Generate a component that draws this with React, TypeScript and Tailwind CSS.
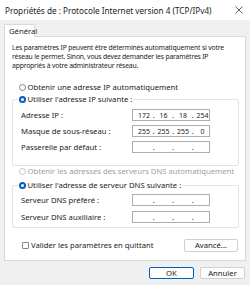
import { ReactNode } from "react";

const font = "font-['Noto_Sans','Liberation_Sans',sans-serif]";

function Radio({ checked, disabled }: { checked?: boolean; disabled?: boolean }) {
  if (checked) {
    return (
      <span className="w-[7px] h-[7px] rounded-full bg-[#005fb8] flex items-center justify-center shrink-0">
        <span className="w-[3px] h-[3px] rounded-full bg-white" />
      </span>
    );
  }
  return (
    <span
      className={`w-[7px] h-[7px] rounded-full border bg-white shrink-0 ${
        disabled ? "border-[#c5c5c5]" : "border-[#858585]"
      }`}
    />
  );
}

function IpField({ value }: { value?: string[] }) {
  const parts = value ?? ["", "", "", ""];
  return (
    <div className="w-[78px] h-[12px] border border-[#adadad] bg-white flex items-center pl-[3px] text-[7px] leading-none">
      {parts.map((p, i) => (
        <div key={i} className="flex items-center">
          <span className="w-[16px] text-center">{p}</span>
          {i < 3 && <span className="w-[3.5px] text-center">.</span>}
        </div>
      ))}
    </div>
  );
}

function Row({ label, value }: { label: string; value?: string[] }) {
  return (
    <div className="flex items-center justify-between pr-[28px] h-[12px]">
      <span>{label}</span>
      <IpField value={value} />
    </div>
  );
}

function Group({ legend, children }: { legend: ReactNode; children: ReactNode }) {
  return (
    <fieldset className="border border-[#e3e3e3] rounded-[2px] p-0">
      <legend className="ml-[5px] px-[1px] bg-white">{legend}</legend>
      {children}
    </fieldset>
  );
}

export default function App() {
  return (
    <div className={`w-[250px] h-[285px] bg-[#f0f0f0] flex flex-col text-[7.7px] leading-[9px] text-[#1b1b1b] ${font}`}>
      {/* title bar */}
      <div className="h-[20px] bg-white flex items-center justify-between pl-[5px] pr-[6px] shrink-0">
        <span className="text-[8.2px]">Propriétés de : Protocole Internet version 4 (TCP/IPv4)</span>
        <svg width="8" height="8" viewBox="0 0 8 8" className="mr-[1px]">
          <path d="M0.5 0.5 L7.5 7.5 M7.5 0.5 L0.5 7.5" stroke="#333" strokeWidth="0.8" />
        </svg>
      </div>

      <div className="px-[4px] pt-[4px] flex flex-col">
        {/* tab */}
        <div className="flex">
          <div className="w-[31px] h-[13px] bg-white border border-b-0 border-[#d9d9d9] flex items-center pl-[4px] relative z-10 -mb-px rounded-t-[1px]">
            Général
          </div>
        </div>

        {/* panel */}
        <div className="h-[225px] bg-white border border-[#d9d9d9] pl-[7px] pr-[4px] pt-[6px] flex flex-col">
          <p className="whitespace-nowrap text-[6.8px] tracking-[-0.17px]">
            Les paramètres IP peuvent être déterminés automatiquement si votre
            <br />
            réseau le permet. Sinon, vous devez demander les paramètres IP
            <br />
            appropriés à votre administrateur réseau.
          </p>

          <div className="flex items-center gap-[1.5px] pl-[7px] mt-[12px] h-[10px]">
            <Radio />
            <span>Obtenir une adresse IP automatiquement</span>
          </div>

          <div className="mt-[2px] pr-[2px]">
            <Group
              legend={
                <span className="flex items-center gap-[1.5px] h-[10px]">
                  <Radio checked />
                  <span>Utiliser l&apos;adresse IP suivante :</span>
                </span>
              }
            >
              <div className="flex flex-col gap-[4px] pl-[8px] pt-[5px] pb-[12px]">
                <Row label="Adresse IP :" value={["172", "16", "18", "254"]} />
                <Row label="Masque de sous-réseau :" value={["255", "255", "255", "0"]} />
                <Row label="Passerelle par défaut :" />
              </div>
            </Group>
          </div>

          <div className="flex items-center gap-[1.5px] pl-[7px] h-[10px] text-[#a0a0a0]">
            <Radio disabled />
            <span>Obtenir les adresses des serveurs DNS automatiquement</span>
          </div>

          <div className="mt-[4px] pr-[2px]">
            <Group
              legend={
                <span className="flex items-center gap-[1.5px] h-[10px]">
                  <Radio checked />
                  <span>Utiliser l&apos;adresse de serveur DNS suivante :</span>
                </span>
              }
            >
              <div className="flex flex-col gap-[5px] pl-[8px] pt-[4px] pb-[4px]">
                <Row label="Serveur DNS préféré :" />
                <Row label="Serveur DNS auxiliaire :" />
              </div>
            </Group>
          </div>

          <div className="flex items-center justify-between mt-[11px] pl-[10px] pr-[3px]">
            <div className="flex items-center gap-[2px]">
              <span className="w-[7px] h-[7px] border border-[#858585] rounded-[1px] bg-white" />
              <span>Valider les paramètres en quittant</span>
            </div>
            <button className="w-[54px] h-[13px] border border-[#d0d0d0] rounded-[2px] bg-[#fdfdfd] flex items-center justify-center">
              Avancé...
            </button>
          </div>
        </div>

        {/* footer */}
        <div className="flex justify-end gap-[6px] mt-[6px] pr-[1px]">
          <button className="w-[45px] h-[12px] border border-[#005fb8] rounded-[2px] bg-[#fdfdfd] flex items-center justify-center">
            OK
          </button>
          <button className="w-[45px] h-[12px] border border-[#d0d0d0] rounded-[2px] bg-[#fdfdfd] flex items-center justify-center">
            Annuler
          </button>
        </div>
      </div>
    </div>
  );
}
